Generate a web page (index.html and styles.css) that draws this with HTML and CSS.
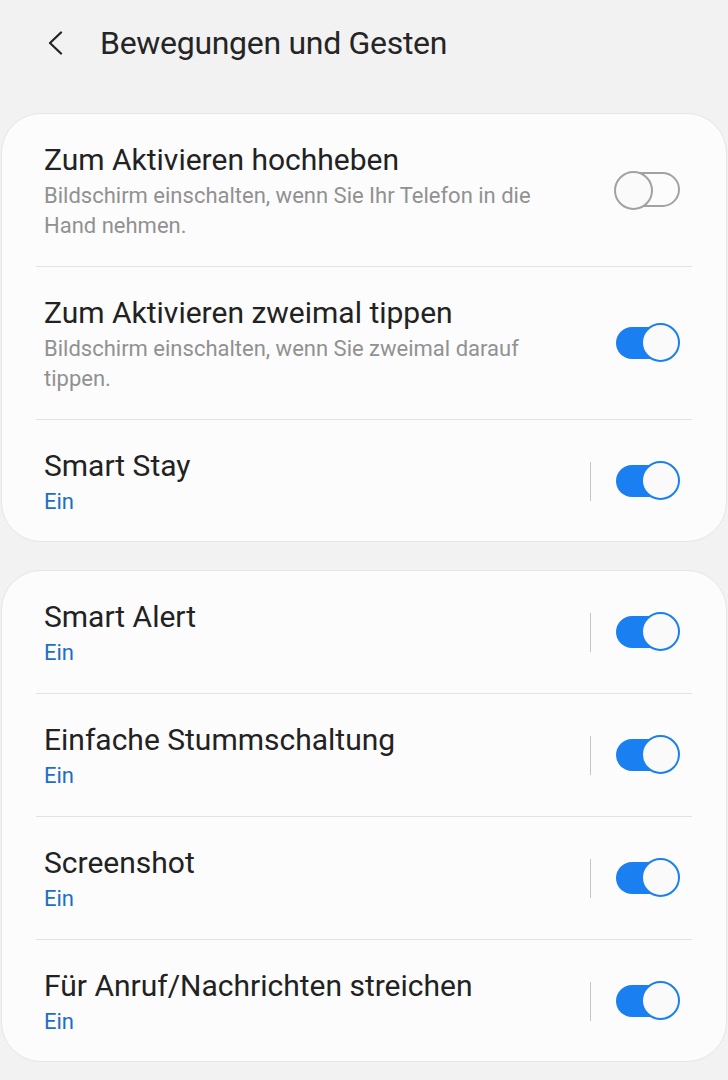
FILE: index.html
```html
<!DOCTYPE html>
<html lang="de">

<head>
  <meta charset="UTF-8">
  <meta name="viewport" content="width=device-width, initial-scale=1.0">
  <title>Bewegungen und Gesten</title>
  <link rel="stylesheet" href="styles.css">
</head>

<body>
  <div class="header">
    <svg class="back" width="16" height="24" viewBox="0 0 16 24">
      <polyline points="14,1.5 3,12 14,22.5" fill="none" stroke="#222" stroke-width="2.2" stroke-linejoin="round" stroke-linecap="round"/>
    </svg>
    <h1 class="title">Bewegungen und Gesten</h1>
  </div>

  <div class="card">
    <div class="row">
      <div class="text">
        <div class="label">Zum Aktivieren hochheben</div>
        <div class="desc">Bildschirm einschalten, wenn Sie Ihr Telefon in die Hand nehmen.</div>
      </div>
      <span class="switch"></span>
    </div>
    <div class="row">
      <div class="text">
        <div class="label">Zum Aktivieren zweimal tippen</div>
        <div class="desc">Bildschirm einschalten, wenn Sie zweimal darauf tippen.</div>
      </div>
      <span class="switch on"></span>
    </div>
    <div class="row">
      <div class="text">
        <div class="label">Smart Stay</div>
        <div class="state">Ein</div>
      </div>
      <span class="sep"></span>
      <span class="switch on"></span>
    </div>
  </div>

  <div class="card">
    <div class="row">
      <div class="text">
        <div class="label">Smart Alert</div>
        <div class="state">Ein</div>
      </div>
      <span class="sep"></span>
      <span class="switch on"></span>
    </div>
    <div class="row">
      <div class="text">
        <div class="label">Einfache Stummschaltung</div>
        <div class="state">Ein</div>
      </div>
      <span class="sep"></span>
      <span class="switch on"></span>
    </div>
    <div class="row">
      <div class="text">
        <div class="label">Screenshot</div>
        <div class="state">Ein</div>
      </div>
      <span class="sep"></span>
      <span class="switch on"></span>
    </div>
    <div class="row">
      <div class="text">
        <div class="label">Für Anruf/Nachrichten streichen</div>
        <div class="state">Ein</div>
      </div>
      <span class="sep"></span>
      <span class="switch on"></span>
    </div>
  </div>
</body>

</html>
```

FILE: styles.css
```css
body{
  margin:0;
  background:#f2f2f2;
  font-family: Roboto, "Noto Sans", sans-serif;
  color:#222;
}
.header{
  display:flex;
  align-items:center;
  height:86px;
  margin-bottom:27px;
  padding-left:47px;
}
.back{
  display:block;
}
.title{
  margin:0 0 0 37px;
  font-size:32px;
  line-height:40px;
  font-weight:400;
  color:#252525;
  letter-spacing:-0.3px;
}
.card{
  margin:0 1px 28px;
  padding:0 34px;
  background:#fcfcfc;
  border:1px solid #e6e6e6;
  border-radius:40px;
}
.row{
  display:flex;
  align-items:center;
  padding:28px 12px 25px 8px;
  border-bottom:1px solid #e2e2e2;
}
.row:last-child{
  border-bottom:none;
  padding-bottom:24px;
}
.text{
  flex:1;
  padding-right:60px;
}
.label{
  font-size:30px;
  line-height:36px;
  color:#222;
}
.desc{
  margin-top:3px;
  font-size:22px;
  line-height:30px;
  color:#919191;
}
.state{
  margin-top:3px;
  font-size:22px;
  line-height:30px;
  color:#1d6fc4;
}
.sep{
  width:1px;
  height:39px;
  margin:-3px 23px 0 0;
  background:#c4c4c4;
}
.switch{
  position:relative;
  flex:none;
  width:66px;
  height:40px;
  margin-top:-3px;
}
.switch::before{
  content:"";
  position:absolute;
  left:1px;
  top:2px;
  width:61px;
  height:31px;
  border:2px solid #a2a2a2;
  border-radius:18px;
}
.switch::after{
  content:"";
  position:absolute;
  left:0;
  top:1px;
  width:35px;
  height:35px;
  border:2px solid #a2a2a2;
  border-radius:50%;
  background:#fafafa;
}
.switch.on::before{
  left:2px;
  top:4px;
  width:56px;
  height:32px;
  border:none;
  border-radius:16px;
  background:#1a80f2;
}
.switch.on::after{
  left:27px;
  top:0;
  width:35px;
  height:35px;
  border-color:#1a80f2;
}
```
